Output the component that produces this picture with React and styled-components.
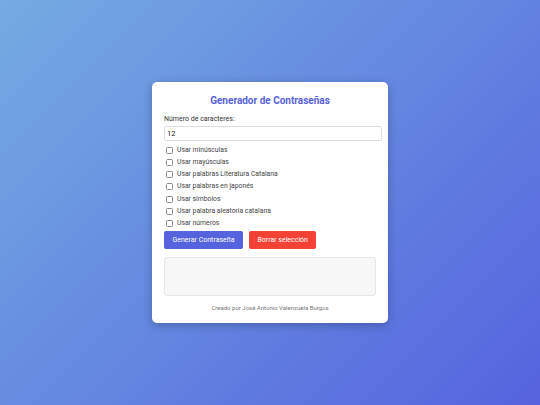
import React, { useState } from 'react';
import styled, { createGlobalStyle } from 'styled-components';

const GlobalStyle = createGlobalStyle`
  html, body {
    margin: 0;
    padding: 0;
  }
  body {
    font-family: Roboto, "Liberation Sans", sans-serif;
    background: linear-gradient(135deg, #74abe2 0%, #5563de 100%);
    min-height: 100vh;
  }
`;

const Page = styled.div`
  min-height: 100vh;
  display: flex;
  align-items: center;
  justify-content: center;
`;

const Card = styled.div`
  width: 212px;
  background: #fff;
  border-radius: 5px;
  padding: 12px 12px 11px;
  box-shadow: 0 2px 8px rgba(0, 0, 0, 0.25);
  color: #333;
`;

const Title = styled.h1`
  margin: 0 0 7px;
  text-align: center;
  font-size: 10px;
  font-weight: 700;
  color: #5861d6;
  line-height: 14px;
`;

const Label = styled.label`
  display: block;
  font-size: 7px;
  line-height: 9px;
  margin-bottom: 2px;
  color: #333;
`;

const NumberInput = styled.input`
  display: block;
  width: 100%;
  box-sizing: content-box;
  height: 11px;
  padding: 1px 2px;
  border: 1px solid #ddd;
  border-radius: 2px;
  font-family: inherit;
  font-size: 7.5px;
  color: #222;
  outline: none;
  margin-bottom: 5px;
`;

const Options = styled.div`
  display: flex;
  flex-direction: column;
  gap: 3px;
  margin-bottom: 3px;
`;

const Option = styled.label`
  display: flex;
  align-items: center;
  gap: 4px;
  padding-left: 2px;
  font-size: 6.8px;
  line-height: 9.2px;
  color: #444;
`;

const Box = styled.span`
  box-sizing: border-box;
  width: 7px;
  height: 7px;
  border: 1px solid #8a8a8a;
  border-radius: 1.5px;
  background: ${p => (p.$checked ? '#5563de' : '#fff')};
  flex-shrink: 0;
`;

const Buttons = styled.div`
  display: flex;
  gap: 6px;
  margin-bottom: 8px;
`;

const Button = styled.button`
  height: 18px;
  padding: 0 8.5px;
  border: none;
  border-radius: 2px;
  font-family: inherit;
  font-size: 7px;
  color: #fff;
  background: ${p => p.$bg};
  cursor: pointer;
`;

const Output = styled.div`
  box-sizing: border-box;
  height: 39px;
  background: #f7f7f7;
  border: 1px solid #e6e6e6;
  border-radius: 3px;
  margin-bottom: 8px;
`;

const Footer = styled.p`
  margin: 0;
  text-align: center;
  font-size: 6px;
  line-height: 8px;
  color: #777;
`;

const options = [
  'Usar minúsculas',
  'Usar mayúsculas',
  'Usar palabras Literatura Catalana',
  'Usar palabras en japonés',
  'Usar símbolos',
  'Usar palabra aleatoria catalana',
  'Usar números',
];

export default function App() {
  const [checked, setChecked] = useState(options.map(() => false));
  const toggle = i => setChecked(c => c.map((v, j) => (j === i ? !v : v)));

  return (
    <>
      <GlobalStyle />
      <Page>
        <Card>
          <Title>Generador de Contraseñas</Title>
          <Label>Número de caracteres:</Label>
          <NumberInput type="text" defaultValue="12" />
          <Options>
            {options.map((o, i) => (
              <Option key={o} onClick={() => toggle(i)}>
                <Box $checked={checked[i]} />
                {o}
              </Option>
            ))}
          </Options>
          <Buttons>
            <Button $bg="#5563de">Generar Contraseña</Button>
            <Button $bg="#f44336" onClick={() => setChecked(options.map(() => false))}>
              Borrar selección
            </Button>
          </Buttons>
          <Output />
          <Footer>Creado por José Antonio Valenzuela Burgos</Footer>
        </Card>
      </Page>
    </>
  );
}
